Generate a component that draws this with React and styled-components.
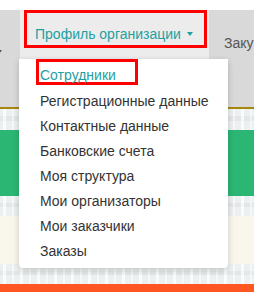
import React from "react";
import styled, { createGlobalStyle } from "styled-components";

const GlobalStyle = createGlobalStyle`
  html, body {
    margin: 0;
    padding: 0;
    background: #fff;
    overflow: hidden;
  }
  body {
    font-family: "Liberation Sans", Arial, sans-serif;
    font-size: 14px;
  }
`;

const Page = styled.div`
  width: 254px;
  height: 292px;
  padding-top: 10px;
  box-sizing: border-box;
  display: flex;
  flex-direction: column;
  position: relative;
  overflow: hidden;
`;

const Nav = styled.nav`
  height: 97px;
  flex: none;
  display: flex;
  background: #d9d9d9;
  border-bottom: 2px solid #a8870e;
`;

const Stub = styled.div`
  width: 20px;
  flex: none;
  padding-top: 33px;
  box-sizing: border-box;
`;

const Caret = styled.span`
  display: inline-block;
  width: 0;
  height: 0;
  border-left: 3.5px solid transparent;
  border-right: 3.5px solid transparent;
  border-top: 4px solid ${(p) => p.$color || "#555"};
  margin-left: ${(p) => p.$offset || 0}px;
  vertical-align: middle;
`;

const ActiveTab = styled.div`
  width: 189px;
  flex: none;
  position: relative;
  background: #ececec;
`;

const TabLink = styled.a`
  display: flex;
  align-items: center;
  gap: 6px;
  margin-left: 4px;
  width: 183px;
  height: 38px;
  box-sizing: border-box;
  border: 3px solid #ff0000;
  padding: 9px 0 0 8px;
  line-height: 20px;
  color: #1fa0a0;
  text-decoration: none;
  white-space: nowrap;
`;

const Tab = styled.div`
  padding: 23px 0 0 15px;
  line-height: 20px;
  color: #555;
  white-space: nowrap;
`;

const Band = styled.div`
  height: ${(p) => p.$h}px;
  flex: none;
  background: ${(p) => p.$bg};
`;

const Pattern = styled(Band)`
  background-color: #edf0f0;
  background-image:
    repeating-linear-gradient(90deg, transparent 0 3px, rgba(255,255,255,0.7) 3px 6px, transparent 6px 12px, rgba(255,255,255,0.5) 12px 14px, transparent 14px 17px),
    linear-gradient(180deg, transparent 0 35%, rgba(225,228,230,0.8) 35% 55%, transparent 55%);
`;

const Menu = styled.ul`
  position: absolute;
  top: 49px;
  left: -1px;
  width: 209px;
  margin: 0;
  padding: 0 0 4px;
  list-style: none;
  background: #fff;
  border-radius: 0 0 4px 4px;
  box-shadow: 0 2px 6px rgba(0, 0, 0, 0.2);
  z-index: 2;
`;

const Item = styled.li`
  height: 25px;
  line-height: 25px;
  padding-left: 21px;
  color: #333;
  white-space: nowrap;
`;

const CurrentItem = styled.li`
  padding: 0 0 4px 17px;
`;

const CurrentLink = styled.a`
  display: block;
  width: 102px;
  height: 26px;
  box-sizing: border-box;
  border: 3px solid #ff0000;
  padding: 6px 0 0 1px;
  line-height: 14px;
  color: #1fa0a0;
  text-decoration: none;
  white-space: nowrap;
`;

const items = [
  "Регистрационные данные",
  "Контактные данные",
  "Банковские счета",
  "Моя структура",
  "Мои организаторы",
  "Мои заказчики",
  "Заказы",
];

export default function App() {
  return (
    <Page>
      <GlobalStyle />
      <Nav>
        <Stub>
          <Caret $offset={-4} />
        </Stub>
        <ActiveTab>
          <TabLink href="#">
            Профиль организации
            <Caret $color="#1fa0a0" />
          </TabLink>
          <Menu>
            <CurrentItem>
              <CurrentLink href="#">Сотрудники</CurrentLink>
            </CurrentItem>
            {items.map((t) => (
              <Item key={t}>{t}</Item>
            ))}
          </Menu>
        </ActiveTab>
        <Tab>Закупки</Tab>
      </Nav>
      <Pattern $h={21} />
      <Band $h={66} $bg="#2bb673" />
      <Pattern $h={20} />
      <Band $h={48} $bg="#f9f7ec" />
      <Pattern $h={20} />
      <Band $h={20} $bg="#ff5622" />
    </Page>
  );
}
